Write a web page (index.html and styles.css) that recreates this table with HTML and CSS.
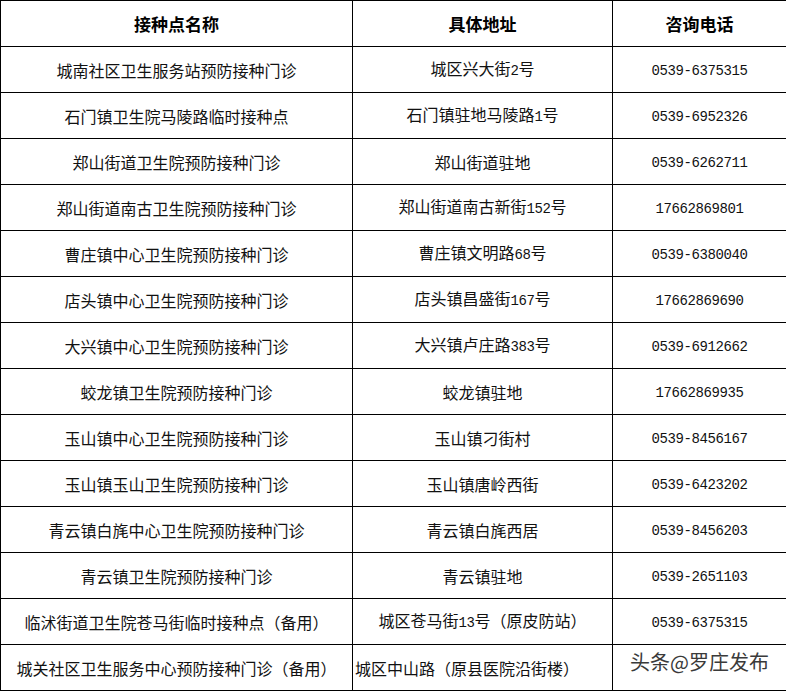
FILE: index.html
```html
<!DOCTYPE html>
<html lang="zh-CN">
<head>
<meta charset="utf-8">
<title>接种点</title>
<link rel="stylesheet" href="styles.css">
</head>
<body>
<table class="sites">
  <colgroup><col class="c1"><col class="c2"><col class="c3"></colgroup>
  <thead>
    <tr><th>接种点名称</th><th>具体地址</th><th>咨询电话</th></tr>
  </thead>
  <tbody>
    <tr><td>城南社区卫生服务站预防接种门诊</td><td>城区兴大街<span class="num">2</span>号</td><td><span class="num">0539-6375315</span></td></tr>
    <tr><td>石门镇卫生院马陵路临时接种点</td><td>石门镇驻地马陵路<span class="num">1</span>号</td><td><span class="num">0539-6952326</span></td></tr>
    <tr><td>郑山街道卫生院预防接种门诊</td><td>郑山街道驻地</td><td><span class="num">0539-6262711</span></td></tr>
    <tr><td>郑山街道南古卫生院预防接种门诊</td><td>郑山街道南古新街<span class="num">152</span>号</td><td><span class="num">17662869801</span></td></tr>
    <tr><td>曹庄镇中心卫生院预防接种门诊</td><td>曹庄镇文明路<span class="num">68</span>号</td><td><span class="num">0539-6380040</span></td></tr>
    <tr><td>店头镇中心卫生院预防接种门诊</td><td>店头镇昌盛街<span class="num">167</span>号</td><td><span class="num">17662869690</span></td></tr>
    <tr><td>大兴镇中心卫生院预防接种门诊</td><td>大兴镇卢庄路<span class="num">383</span>号</td><td><span class="num">0539-6912662</span></td></tr>
    <tr><td>蛟龙镇卫生院预防接种门诊</td><td>蛟龙镇驻地</td><td><span class="num">17662869935</span></td></tr>
    <tr><td>玉山镇中心卫生院预防接种门诊</td><td>玉山镇刁街村</td><td><span class="num">0539-8456167</span></td></tr>
    <tr><td>玉山镇玉山卫生院预防接种门诊</td><td>玉山镇唐岭西街</td><td><span class="num">0539-6423202</span></td></tr>
    <tr><td>青云镇白旄中心卫生院预防接种门诊</td><td>青云镇白旄西居</td><td><span class="num">0539-8456203</span></td></tr>
    <tr><td>青云镇卫生院预防接种门诊</td><td>青云镇驻地</td><td><span class="num">0539-2651103</span></td></tr>
    <tr><td>临沭街道卫生院苍马街临时接种点（备用）</td><td>城区苍马街<span class="num">13</span>号（原皮防站）</td><td><span class="num">0539-6375315</span></td></tr>
    <tr><td>城关社区卫生服务中心预防接种门诊（备用）</td><td class="left">城区中山路（原县医院沿街楼）</td><td class="mark-cell"><span class="watermark">头条@罗庄发布</span></td></tr>
  </tbody>
</table>
</body>
</html>
```
FILE: styles.css
```css
html, body {
  margin: 0;
  padding: 0;
  background: #ffffff;
}
body {
  font-family: "Noto Sans CJK SC", "Liberation Sans", sans-serif;
  color: #111;
}
.sites {
  border-collapse: collapse;
  table-layout: fixed;
  width: 786px;
}
.c1 { width: 352px; }
.c2 { width: 260px; }
.c3 { width: 174px; }
.sites th,
.sites td {
  border: 1px solid #000;
  height: 45px;
  padding: 0;
  text-align: center;
  vertical-align: middle;
  white-space: nowrap;
  font-size: 16px;
  line-height: 20px;
  font-weight: 400;
}
.sites th {
  font-size: 17px;
  font-weight: 700;
  color: #000;
}
.sites td.left {
  text-align: left;
  padding-left: 2px;
}
.num {
  font-family: "Liberation Mono", "DejaVu Sans Mono", monospace;
  font-size: 14px;
  letter-spacing: -0.4px;
}
.mark-cell {
  position: relative;
}
.watermark {
  font-size: 20px;
  color: #3a3a3a;
  text-shadow: 0 0 2px #fff, 0 0 2px #fff;
  position: relative;
  left: 0;
  top: -5px;
}
```
